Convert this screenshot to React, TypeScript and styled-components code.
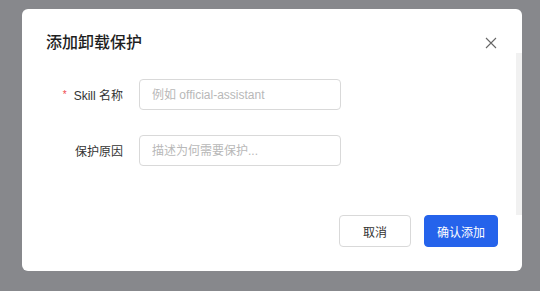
import styled, { createGlobalStyle } from "styled-components";

const GlobalStyle = createGlobalStyle`
	html, body {
		margin: 0;
		padding: 0;
		background: #87888c;
	}
	body {
		font-family: "Liberation Sans", "Noto Sans CJK SC", sans-serif;
		width: 540px;
		height: 291px;
		overflow: hidden;
	}
`;

const Backdrop = styled.div`
	padding: 9px 0 0 22px;
`;

const Dialog = styled.div`
	position: relative;
	box-sizing: border-box;
	width: 500px;
	height: 262px;
	padding: 24px;
	background: #fff;
	border-radius: 6px;
	display: flex;
	flex-direction: column;
`;

const ScrollTrack = styled.div`
	position: absolute;
	right: 0;
	top: 44px;
	width: 6px;
	height: 162px;
	background: #f1f1f1;
`;

const Header = styled.div`
	height: 20px;
	display: flex;
	align-items: center;
	justify-content: space-between;
`;

const Title = styled.h3`
	margin: 0;
	font-size: 16px;
	line-height: 20px;
	font-weight: 500;
	color: #1f1f1f;
`;

const CloseButton = styled.button`
	width: 14px;
	height: 14px;
	padding: 0;
	border: none;
	background: none;
	display: flex;
	align-items: center;
	justify-content: center;
	color: #666;
	cursor: pointer;
`;

const Form = styled.div`
	margin-top: 26px;
	display: flex;
	flex-direction: column;
	gap: 25px;
`;

const Row = styled.div`
	display: flex;
	align-items: center;
	gap: 16px;
`;

const Label = styled.label`
	width: 77px;
	text-align: right;
	font-size: 12px;
	color: #333;
	white-space: nowrap;
`;

const Required = styled.span`
	color: #f0484f;
	margin-right: 7px;
	font-size: 10px;
	position: relative;
	top: -2px;
`;

const Input = styled.input`
	box-sizing: border-box;
	width: 202px;
	height: 31px;
	padding: 0 12px;
	border: 1px solid #d9d9d9;
	border-radius: 4px;
	font-family: inherit;
	font-size: 12px;
	color: #333;
	outline: none;
	&::placeholder {
		color: #b8b8b8;
	}
`;

const Footer = styled.div`
	margin-top: auto;
	display: flex;
	justify-content: flex-end;
	gap: 13px;
`;

const Button = styled.button<{ $primary?: boolean }>`
	box-sizing: border-box;
	height: 32px;
	min-width: 72px;
	padding: 0 12px;
	border-radius: 4px;
	font-family: inherit;
	font-size: 12px;
	cursor: pointer;
	border: 1px solid ${(p) => (p.$primary ? "#2563eb" : "#d9d9d9")};
	background: ${(p) => (p.$primary ? "#2563eb" : "#fff")};
	color: ${(p) => (p.$primary ? "#fff" : "#333")};
`;

export default function App() {
	return (
		<>
			<GlobalStyle />
			<Backdrop>
				<Dialog>
					<ScrollTrack />
					<Header>
						<Title>添加卸载保护</Title>
						<CloseButton aria-label="关闭">
							<svg width="12" height="12" viewBox="0 0 12 12">
								<path
									d="M1 1 L11 11 M11 1 L1 11"
									stroke="currentColor"
									strokeWidth="1.1"
									fill="none"
								/>
							</svg>
						</CloseButton>
					</Header>
					<Form>
						<Row>
							<Label>
								<Required>*</Required>Skill 名称
							</Label>
							<Input placeholder="例如 official-assistant" />
						</Row>
						<Row>
							<Label>保护原因</Label>
							<Input placeholder="描述为何需要保护..." />
						</Row>
					</Form>
					<Footer>
						<Button>取消</Button>
						<Button $primary>确认添加</Button>
					</Footer>
				</Dialog>
			</Backdrop>
		</>
	);
}
